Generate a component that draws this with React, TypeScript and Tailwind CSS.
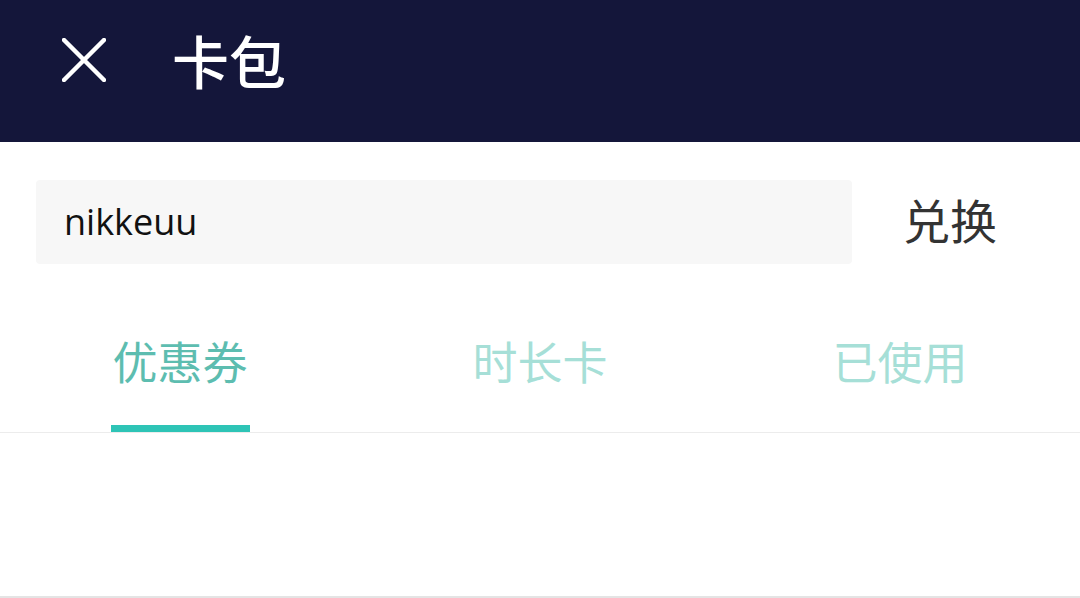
const tabs = ["优惠券", "时长卡", "已使用"];

export default function App() {
    const font = { fontFamily: '"Noto Sans CJK SC", "Noto Sans", sans-serif' };
    return (
        <div className="w-[1080px] h-[598px] flex flex-col bg-white overflow-hidden" style={font}>
            <div className="h-[142px] bg-[#14163a] flex items-center shrink-0 pb-[22px]">
                <div className="w-[172px] pl-[62px] flex items-center">
                    <svg width="44" height="44" viewBox="0 0 44 44" className="text-white">
                        <path d="M2 2L42 42M42 2L2 42" stroke="currentColor" strokeWidth="4.5" strokeLinecap="round" />
                    </svg>
                </div>
                <h1 className="text-[57px] leading-none text-white font-medium -mt-[2px]">卡包</h1>
            </div>
            <div className="flex items-center pt-[38px] pl-[36px]">
                <div className="w-[816px] h-[84px] bg-[#f7f7f7] rounded-[4px] flex items-center pl-[28px]">
                    <span className="text-[36px] text-[#111] leading-none" style={{ fontFamily: '"Open Sans", "Noto Sans", sans-serif' }}>
                        nikkeuu
                    </span>
                </div>
                <button className="flex-1 text-center text-[47px] leading-none text-[#333] pr-[32px] -mt-[8px]">兑换</button>
            </div>
            <div className="mt-[56px] grid grid-cols-3 border-b border-[#ececec]">
                {tabs.map((t, i) => (
                    <div key={t} className="flex flex-col items-center">
                        <span
                            className={
                                i === 0
                                    ? "text-[45px] leading-none text-[#5dbdb0] pt-[18px]"
                                    : "text-[45px] leading-none text-[#a6dfd7] pt-[18px]"
                            }
                        >
                            {t}
                        </span>
                        <div className={i === 0 ? "mt-[42px] w-[139px] h-[7px] bg-[#2ec4b6]" : "mt-[42px] h-[7px]"} />
                    </div>
                ))}
            </div>
            <div className="flex-1" />
            <div className="h-[2px] bg-[#e4e4e4]" />
        </div>
    );
}
